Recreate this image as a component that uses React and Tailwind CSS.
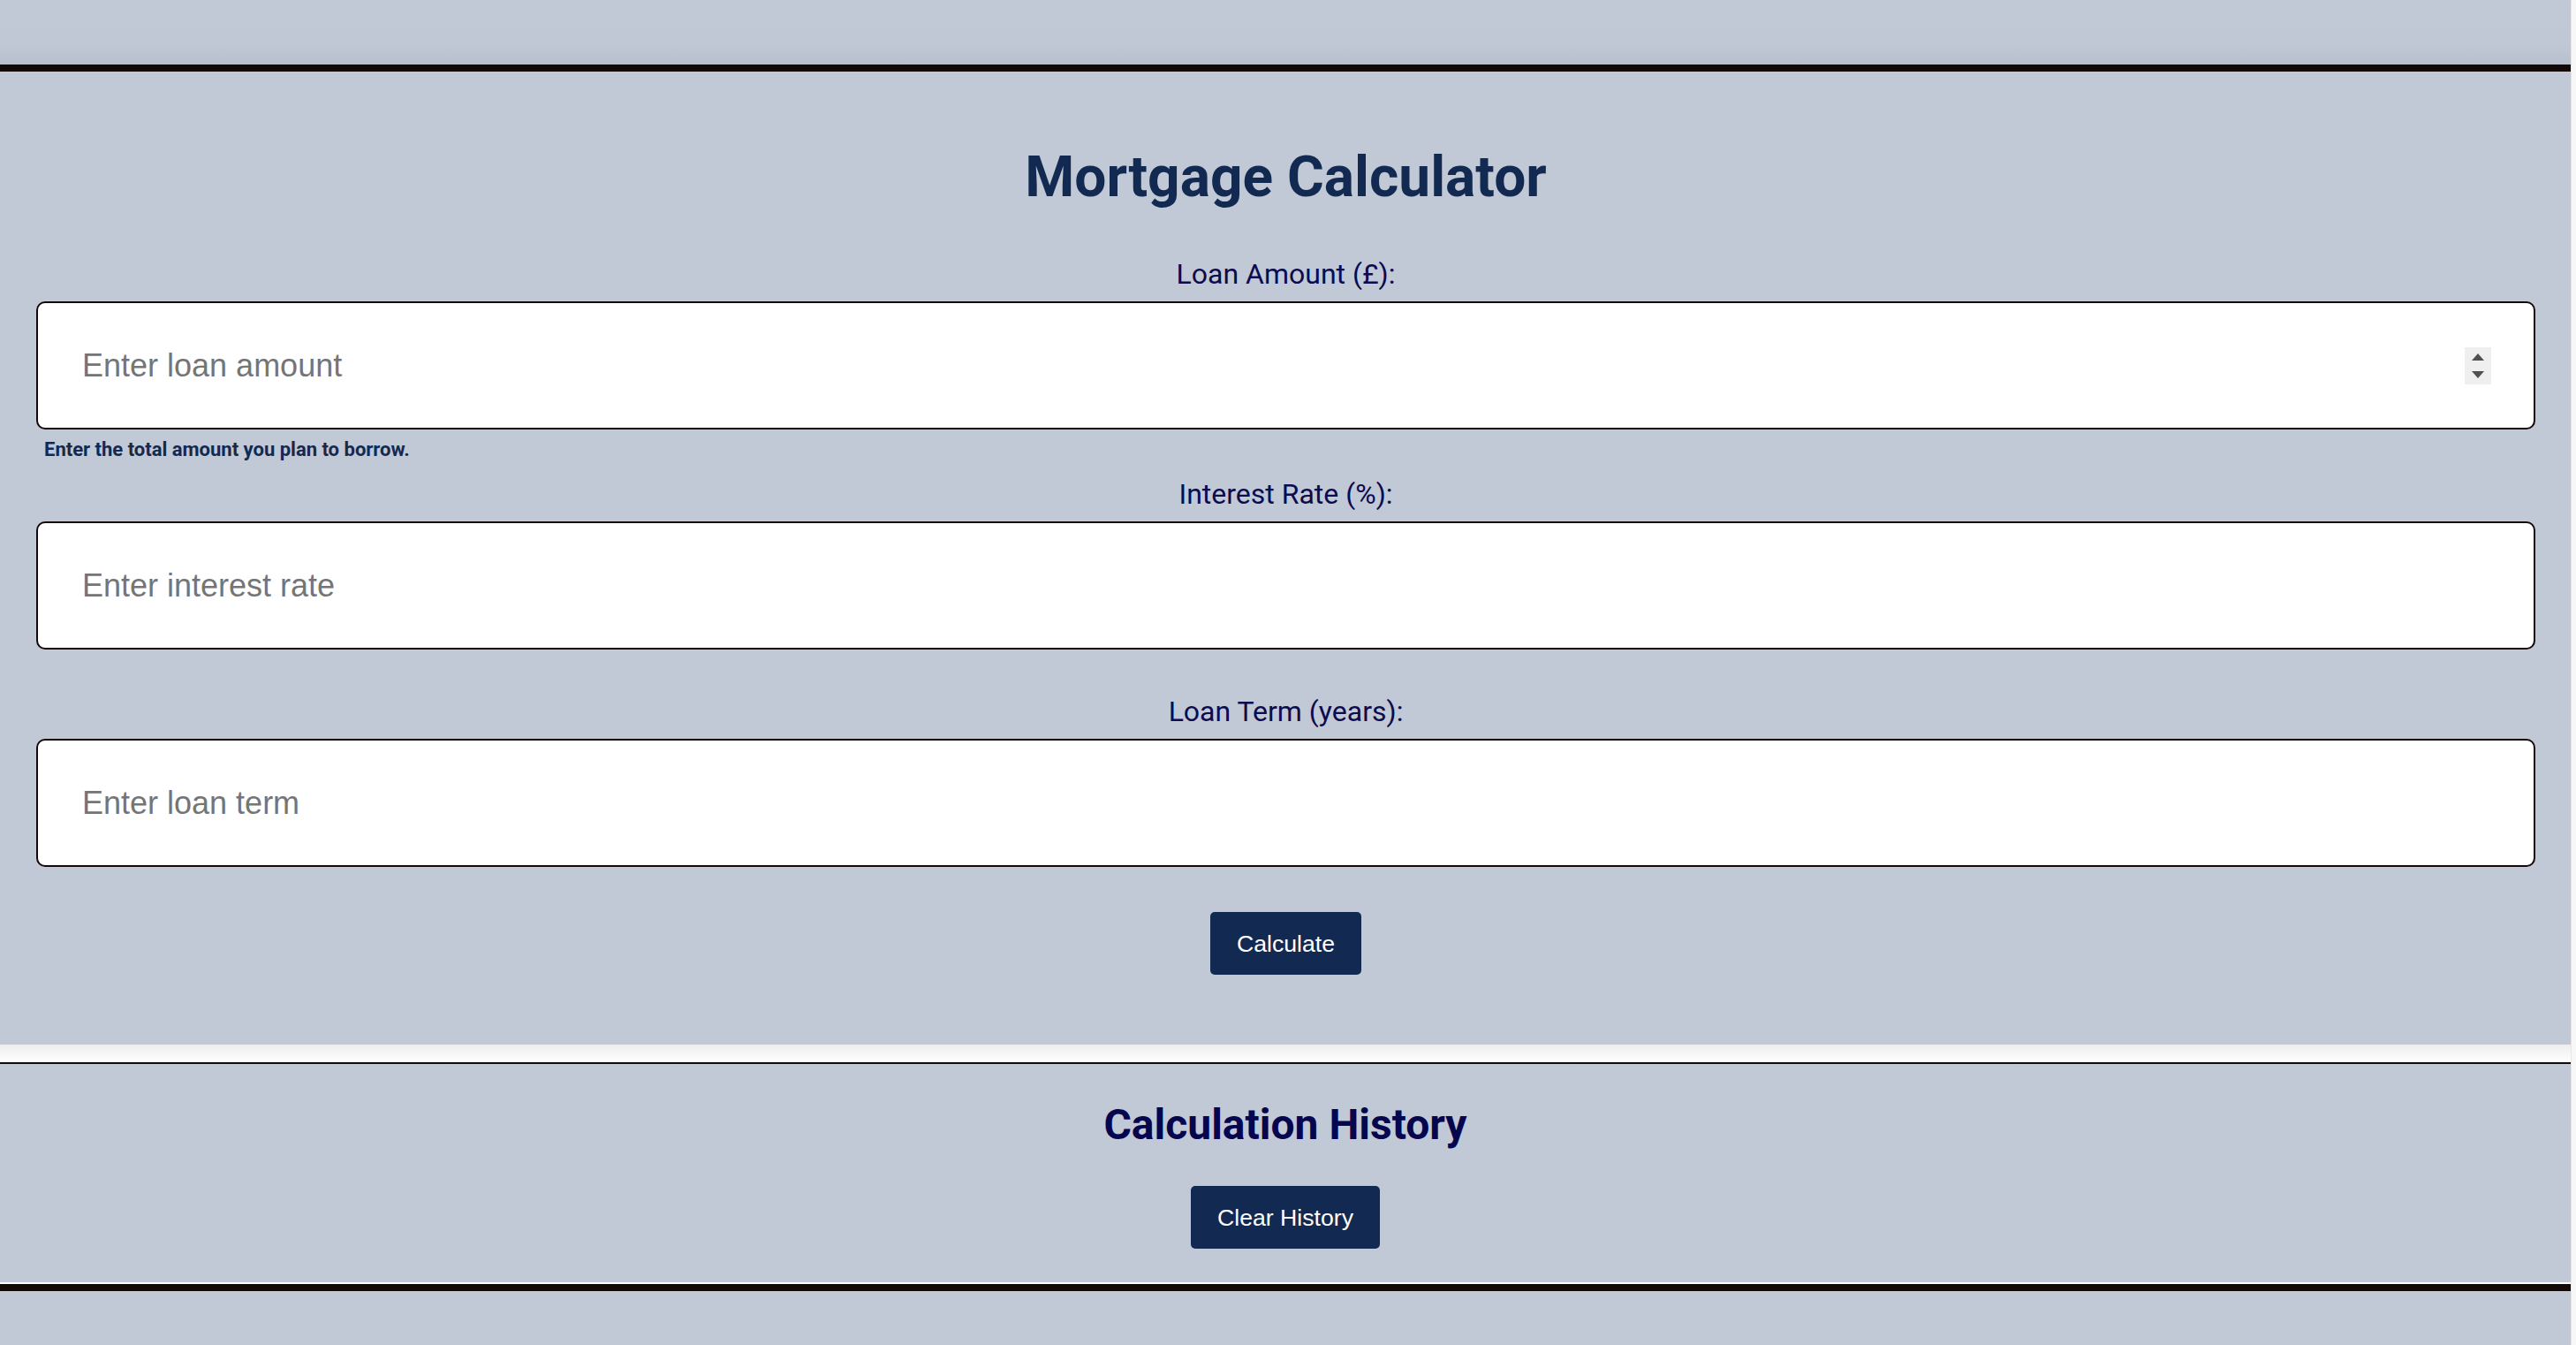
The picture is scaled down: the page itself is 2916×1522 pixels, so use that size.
import { useState } from 'react';

const roboto = "font-['Roboto',sans-serif]";
const arial = "font-['Liberation_Sans',Arial,sans-serif]";

function Spinner() {
  return (
    <div className="absolute right-[50px] top-1/2 -translate-y-1/2 flex h-[42px] w-[30px] flex-col items-center justify-center gap-[12px] bg-[#efefef]">
      <svg width="14" height="8" viewBox="0 0 14 8">
        <path d="M7 0 L14 8 L0 8 Z" fill="#505050" />
      </svg>
      <svg width="14" height="8" viewBox="0 0 14 8">
        <path d="M0 0 L14 0 L7 8 Z" fill="#505050" />
      </svg>
    </div>
  );
}

function Field({ label, placeholder, value, onChange, spinner, className = '' }) {
  return (
    <div className={className}>
      <label className={`block text-center text-[32px] leading-[38px] text-[#0b0b4f] ${roboto}`}>
        {label}
      </label>
      <div className="relative mt-[12px]">
        <input
          type="text"
          value={value}
          onChange={(e) => onChange(e.target.value)}
          placeholder={placeholder}
          className={`block h-[145px] w-full rounded-[10px] border-2 border-[#140808] bg-white pl-[50px] pr-[100px] text-[36px] text-black outline-none placeholder:text-[#757575] ${arial}`}
        />
        {spinner && <Spinner />}
      </div>
    </div>
  );
}

export default function App() {
  const [amount, setAmount] = useState('');
  const [rate, setRate] = useState('');
  const [term, setTerm] = useState('');

  return (
    <div className="flex min-h-[1522px] w-full bg-[#c1c8d6]">
      <div className="flex min-w-0 flex-1 flex-col">
        {/* Header strip */}
        <div className="h-[73px] bg-linear-to-b from-[#c2c9d6] via-[#c1c8d5] via-70% to-[#b8bfcd]" />

        {/* Calculator */}
        <section className="border-t-[8px] border-[#130a08] bg-[#c1c8d6] pl-[41px] pr-[40px] pt-[82px] pb-[79px]">
          <h1 className={`text-center text-[64px] font-bold leading-[75px] text-[#122a52] ${roboto}`}>
            Mortgage Calculator
          </h1>

          <Field
            className="mt-[53px]"
            label="Loan Amount (£):"
            placeholder="Enter loan amount"
            value={amount}
            onChange={setAmount}
            spinner
          />
          <p className={`mt-[10px] pl-[9px] text-[22px] font-bold leading-[26px] text-[#122a52] ${roboto}`}>
            Enter the total amount you plan to borrow.
          </p>

          <Field
            className="mt-[18px]"
            label="Interest Rate (%):"
            placeholder="Enter interest rate"
            value={rate}
            onChange={setRate}
          />

          <Field
            className="mt-[51px]"
            label="Loan Term (years):"
            placeholder="Enter loan term"
            value={term}
            onChange={setTerm}
          />

          <div className="mt-[51px] flex justify-center">
            <button className={`h-[71px] rounded-[5px] bg-[#122a52] px-[30px] text-[26.67px] text-white ${arial}`}>
              Calculate
            </button>
          </div>
        </section>

        <div className="h-[20px] bg-linear-to-b from-[#ededed] to-white" />

        {/* History */}
        <section className="border-t-2 border-[#130a08] bg-[#c1c8d6] pt-[41px] pb-[38px]">
          <h2 className={`text-center text-[48px] font-bold leading-[56px] text-[#06064e] ${roboto}`}>
            Calculation History
          </h2>
          <div className="mt-[41px] flex justify-center">
            <button className={`h-[71px] rounded-[5px] bg-[#122a52] px-[30px] text-[26.67px] text-white ${arial}`}>
              Clear History
            </button>
          </div>
        </section>

        <div className="h-[2px] bg-white" />
        <div className="h-[8px] bg-[#130a08]" />
        <div className="flex-1 bg-[#c1c8d6]" />
      </div>
      <div className="w-[6px] shrink-0 border-l border-[#e6e6e6] bg-[#f7f7f7]" />
    </div>
  );
}
